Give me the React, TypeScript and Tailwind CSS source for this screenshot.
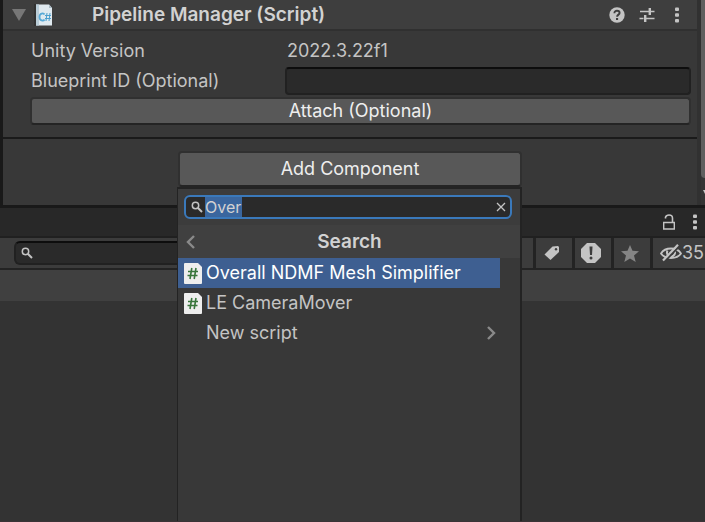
import type { ReactNode } from "react";

const SearchIcon = () => (
  <svg viewBox="0 0 12 12" className="size-3 shrink-0" fill="none" stroke="#c4c4c4">
    <circle cx="4.5" cy="4.5" r="3.2" strokeWidth="1.5" />
    <path d="M7 7l4 4" strokeWidth="2" />
  </svg>
);

const HelpIcon = () => (
  <svg viewBox="0 0 16 16" className="size-4">
    <circle cx="8" cy="8" r="7.7" fill="#c4c4c4" />
    <path d="M5.4 6.3C5.4 4.6 6.5 3.8 8 3.8s2.6.9 2.6 2.2C10.6 7.6 8.1 7.7 8.1 9.7" fill="none" stroke="#3e3e3e" strokeWidth="1.9" />
    <rect x="7" y="11" width="2.1" height="2" fill="#3e3e3e" />
  </svg>
);

const PresetIcon = () => (
  <svg viewBox="0 0 16 16" className="size-4" stroke="#c4c4c4" fill="none">
    <path d="M1 4.5h10M12 4.5h3.5M.5 11.5h4M7 11.5h8.5" strokeWidth="1.5" />
    <path d="M10.8 1v7M6.2 8v7" strokeWidth="2.4" />
  </svg>
);

const KebabIcon = () => (
  <svg viewBox="0 0 4 16" className="h-4 w-1" fill="#c4c4c4">
    <rect y="0.5" width="4" height="3.6" rx="1" />
    <rect y="6.2" width="4" height="3.6" rx="1" />
    <rect y="11.9" width="4" height="3.6" rx="1" />
  </svg>
);

const CSharpAssetIcon = () => (
  <svg viewBox="0 0 20 22" className="h-[22px] w-5">
    <path d="M0 0h2v22H0z" fill="#2b2b2b" opacity=".6" />
    <path d="M2 .5h13l3 3.5v17.5H2z" fill="#dfe9ef" />
    <path d="M2 .5h3v21H2z" fill="#b9cdd8" />
    <path d="M15 .5V4h3z" fill="#a9bac4" />
    <path d="M10.5 10.5C9.5 8.8 5.5 9 5.5 13s4 4.4 5 2.5" fill="none" stroke="#58a9d6" strokeWidth="1.8" />
    <path d="M13 9l-1 8M16 9l-1 8M11 11.5h6M11 14.5h6" fill="none" stroke="#4a9fce" strokeWidth="1" />
  </svg>
);

const ScriptIcon = () => (
  <svg viewBox="0 0 18 21" className="h-[21px] w-[18px] shrink-0">
    <path d="M1 0h13l4 4v16a1 1 0 0 1-1 1H1a1 1 0 0 1-1-1V1a1 1 0 0 1 1-1z" fill="#eee" />
    <path d="M7.8 5L6 16M12 5l-1.8 11M4 8.5h10M3.5 12.5h10" fill="none" stroke="#38763b" strokeWidth="1.6" />
  </svg>
);

const LockIcon = () => (
  <svg viewBox="0 0 12 16" className="h-4 w-3" fill="none" stroke="#c4c4c4">
    <path d="M.7 8.5h10.6v6.5H.7z" strokeWidth="1.4" />
    <path d="M2.5 4.5V3.3C3 1.8 4.5 1 6 1c2.2 0 3.5 1.3 3.5 3.2v4.3" strokeWidth="1.6" />
  </svg>
);

const TagIcon = () => (
  <svg viewBox="0 0 16 16" className="size-4">
    <path d="M8.5 1.5L14 1l1 1v5L6.5 15 .5 9.5z" fill="#c4c4c4" />
    <circle cx="12" cy="4.3" r="1.2" fill="#3c3c3c" />
  </svg>
);

const AlertIcon = () => (
  <svg viewBox="0 0 20 20" className="size-5">
    <path d="M6 0h8l6 6v8l-6 6H6l-6-6V6z" fill="#c4c4c4" />
    <path d="M8.5 3.5h3l-.5 8.500H9z" fill="#3c3c3c" />
    <circle cx="10" cy="15" r="1.5" fill="#3c3c3c" />
  </svg>
);

const StarIcon = () => (
  <svg viewBox="0 0 18 17" className="h-[17px] w-[18px]">
    <path d="M9 0l2.5 5.8 6.500.5-5 4.2 1.7 6.5L9 13.5 3.3 17 5 10.5 0 6.3l6.500-.5z" fill="#858585" />
  </svg>
);

const HiddenIcon = () => (
  <svg viewBox="0 0 22 18" className="h-[18px] w-[22px] shrink-0" fill="none" stroke="#c4c4c4">
    <path d="M1 9.5C5 2.8 17 2.8 21 9.5 17 15.5 5 15.5 1 9.5z" strokeWidth="1.8" />
    <path d="M7.5 6.5c-1.5 3 .5 6 3.5 6s5-3 3.5-6" strokeWidth="2" />
    <path d="M4.5 17.5L19.5 2" stroke="#3c3c3c" strokeWidth="2" />
    <path d="M3 16.5L18 .8" strokeWidth="2.2" />
  </svg>
);

const Chevron = ({ back = false }: { back?: boolean }) => (
  <svg viewBox="0 0 9 14" className="h-3.5 w-[9px] shrink-0" fill="none" stroke="#8a8a8a" strokeWidth="2.4">
    <path d={back ? "M8 1L2 7l6 6" : "M1 1l6 6-6 6"} />
  </svg>
);

const ToolButton = ({ label, children }: { label: string; children: ReactNode }) => (
  <button aria-label={label} className="flex w-9 items-center justify-center bg-[#3c3c3c] pr-1">
    {children}
  </button>
);

const AddComponentMenu = () => (
  <div className="absolute top-full -left-px z-10 h-screen w-[345px] border-t-2 border-r-2 border-l border-[#232323] bg-[#383838]">
    <div className="bg-[#3c3c3c] py-1.5 pr-2 pl-1.5">
      <label className="flex h-6 items-center gap-0.5 rounded-md border-2 border-[#3a79bb] bg-[#2a2a2a] pr-1 pl-[5px]">
        <SearchIcon />
        <span className="relative flex flex-1 items-center">
          <span className="absolute top-0 left-0 h-5 w-[37px] bg-[#3a669e]" />
          <input
            aria-label="Search components"
            defaultValue="Over"
            className="relative h-5 w-full bg-transparent text-base text-[#d2d2d2] outline-none"
          />
        </span>
        <button aria-label="Clear search">
          <svg viewBox="0 0 10 10" className="size-2.5" stroke="#c4c4c4" strokeWidth="1.3">
            <path d="M1 1l8 8M9 1L1 9" />
          </svg>
        </button>
      </label>
    </div>
    <div className="flex h-[33px] items-center bg-[#404040] pr-4 pl-2">
      <button aria-label="Back">
        <Chevron back />
      </button>
      <h2 className="flex-1 text-center text-[19px] font-semibold text-[#d2d2d2]">Search</h2>
    </div>
    <ul className="mr-5">
      <li>
        <button className="flex h-[30px] w-full items-center gap-1 bg-[#3e5f91] pl-1.5 text-white">
          <ScriptIcon />
          Overall NDMF Mesh Simplifier
        </button>
      </li>
      <li>
        <button className="flex h-[30px] w-full items-center gap-1 pl-1.5">
          <ScriptIcon />
          LE CameraMover
        </button>
      </li>
      <li>
        <button className="flex h-[30px] w-full items-center justify-between pr-1 pl-7">
          New script
          <Chevron />
        </button>
      </li>
    </ul>
  </div>
);

const Inspector = () => (
  <section className="flex border-b-[3px] border-[#191919]">
    <div className="min-w-0 flex-1 border-l-[3px] border-[#191919]">
      <header className="flex h-[31px] items-center border-b-2 border-[#303030] bg-[#3e3e3e] pr-[18px] pl-[9px]">
        <svg viewBox="0 0 14 12" className="h-3 w-3.5" fill="#777">
          <path d="M0 0h14L7 12z" />
        </svg>
        <span className="ml-2">
          <CSharpAssetIcon />
        </span>
        <h1 className="ml-[38px] flex-1 text-[19px] font-semibold whitespace-nowrap text-[#d2d2d2]">
          Pipeline Manager (Script)
        </h1>
        <div className="flex items-center gap-3.5">
          <button aria-label="Help">
            <HelpIcon />
          </button>
          <button aria-label="Presets">
            <PresetIcon />
          </button>
          <button aria-label="Component options" className="ml-1.5">
            <KebabIcon />
          </button>
        </div>
      </header>
      <div className="bg-[#383838] pt-[5px] pr-1.5 pb-3 pl-[27px]">
        <div className="flex h-[30px] items-center">
          <span className="w-[257px] pl-px">Unity Version</span>
          <span>2022.3.22f1</span>
        </div>
        <div className="flex h-[30px] items-center">
          <label htmlFor="blueprint" className="w-[255px] shrink-0 pl-px">
            Blueprint ID (Optional)
          </label>
          <input
            id="blueprint"
            className="h-7 min-w-0 flex-1 rounded border-2 border-[#212121] border-t-[#0d0d0d] bg-[#2a2a2a] px-1 outline-none"
          />
        </div>
        <button className="mt-px block h-7 w-full rounded border-2 border-[#303030] border-b-[#242424] bg-[#585858] leading-6 text-[#eee]">
          Attach (Optional)
        </button>
      </div>
      <div className="h-0.5 bg-[#1a1a1a]" />
      <div className="flex h-[66px] justify-center bg-[#383838] pt-3">
        <div className="relative h-9 w-[344px]">
          <button className="h-9 w-full rounded border-2 border-[#303030] border-b-[#242424] bg-[#585858] text-[#eee]">
            Add Component
          </button>
          <AddComponentMenu />
        </div>
      </div>
    </div>
    <div className="flex w-2 flex-col border-l-4 border-[#313131] bg-[#353535]">
      <div className="h-[178px] rounded-bl-md bg-[#5f5f5f]" />
      <svg viewBox="0 0 4 5" className="mt-3 h-[5px] w-1" fill="#c4c4c4">
        <path d="M2 0h2v4z" />
      </svg>
    </div>
  </section>
);

const ProjectPanel = () => (
  <section className="flex flex-1 flex-col">
    <div className="flex h-[30px] items-center justify-end gap-[18px] border-b-2 border-[#202020] bg-[#282828] pr-2">
      <button aria-label="Lock">
        <LockIcon />
      </button>
      <button aria-label="Panel options">
        <KebabIcon />
      </button>
    </div>
    <div className="flex h-8 border-b-2 border-[#232323] bg-[#232323]">
      <div className="flex flex-1 items-center bg-[#3c3c3c] pr-2 pl-3.5">
        <label className="flex h-6 flex-1 items-center rounded-md border-2 border-[#212121] border-t-[#0d0d0d] bg-[#2a2a2a] pl-[5px]">
          <SearchIcon />
          <input aria-label="Search assets" className="min-w-0 flex-1 bg-transparent px-1 outline-none" />
        </label>
        <span className="w-5" />
      </div>
      <div className="ml-[3px] flex gap-[3px]">
        <ToolButton label="Filter by label">
          <TagIcon />
        </ToolButton>
        <ToolButton label="Filter by import log">
          <AlertIcon />
        </ToolButton>
        <ToolButton label="Favorites">
          <StarIcon />
        </ToolButton>
        <button className="flex w-[52px] items-center bg-[#3c3c3c] pl-[7px]">
          <HiddenIcon />
          <span>35</span>
        </button>
      </div>
    </div>
    <div className="h-[31px] bg-[#404040]" />
  </section>
);

export default function App() {
  return (
    <main className="relative flex h-screen flex-col overflow-hidden bg-[#333] font-['Inter',sans-serif] text-lg text-[#c4c4c4]">
      <Inspector />
      <ProjectPanel />
      <div className="z-20 h-px bg-[#3a3336]" />
    </main>
  );
}
